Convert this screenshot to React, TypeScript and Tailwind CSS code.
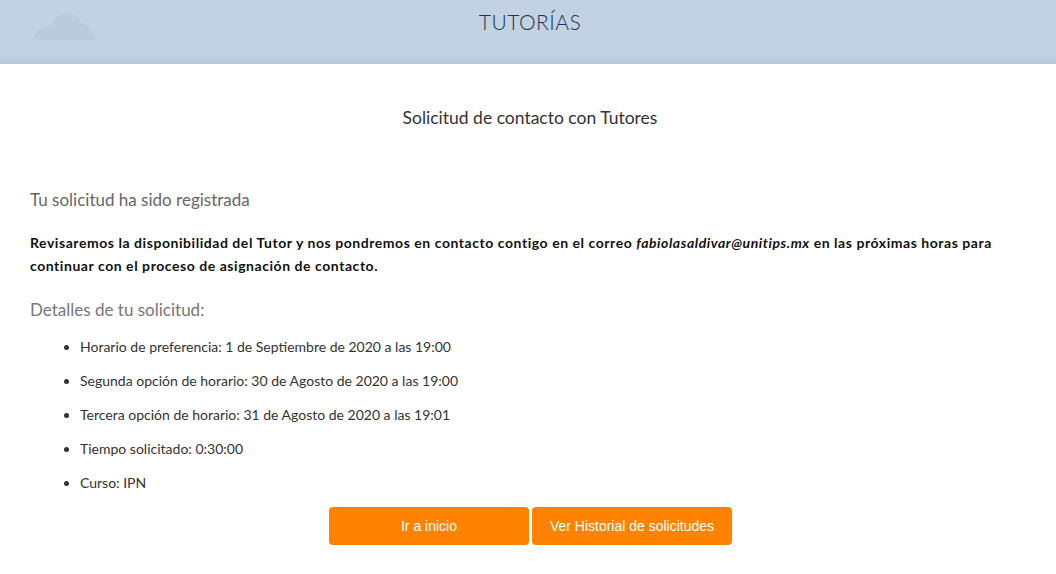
import React from "react";

const details = [
  "Horario de preferencia: 1 de Septiembre de 2020 a las 19:00",
  "Segunda opción de horario: 30 de Agosto de 2020 a las 19:00",
  "Tercera opción de horario: 31 de Agosto de 2020 a las 19:01",
  "Tiempo solicitado: 0:30:00",
  "Curso: IPN",
];

function Cloud() {
  return (
    <svg width="66" height="30" viewBox="0 0 66 30" className="absolute left-[31px] top-[12px]">
      <path
        d="M1 28 C3 20 10 15 22 14 C22 6 28 1 36 1 C44 1 49 6 50 11 C55 11 58 14 58 18 C62 19 64 23 65 28 Z"
        fill="#b8c8d9"
        opacity="0.7"
      />
    </svg>
  );
}

export default function App() {
  return (
    <div className="w-[1056px] h-[574px] bg-white font-['Lato',sans-serif] overflow-hidden">
      {/* Header */}
      <div className="relative h-[64px] bg-gradient-to-b from-[#c2d2e2] from-88% to-[#b8c7d7] flex justify-center pt-[6px]">
        <Cloud />
        <h1 className="text-[21px] font-light text-[#1b3552] tracking-[0.5px] pl-[4px]">TUTORÍAS</h1>
      </div>

      <div className="px-[30px]">
        <h2 className="text-center text-[17.5px] text-[#333] mt-[42px] leading-[24px] pl-[4px]">
          Solicitud de contacto con Tutores
        </h2>

        <h3 className="mt-[58px] text-[17px] text-[#666] leading-[24px]">Tu solicitud ha sido registrada</h3>

        <p className="mt-[19px] text-[14px] font-bold text-[#111] leading-[23px] tracking-[0.55px]">
          Revisaremos la disponibilidad del Tutor y nos pondremos en contacto contigo en el correo{" "}
          <em>fabiolasaldivar@unitips.mx</em> en las próximas horas para
          <br />
          continuar con el proceso de asignación de contacto.
        </p>

        <h3 className="mt-[21px] text-[17px] text-[#777] leading-[24px]">Detalles de tu solicitud:</h3>

        <ul className="mt-[15px] pl-[50px] list-disc text-[14px] text-[#333]">
          {details.map((d) => (
            <li key={d} className="leading-[20px] mb-[14px]">
              {d}
            </li>
          ))}
        </ul>

        <div className="flex justify-center gap-[3px] mt-[2px] pl-[5px]">
          <button className="w-[200px] h-[38px] rounded bg-[#ff8300] text-white text-[14px] font-['Liberation_Sans',sans-serif]">
            Ir a inicio
          </button>
          <button className="w-[200px] h-[38px] rounded bg-[#ff8300] text-white text-[14px] font-['Liberation_Sans',sans-serif]">
            Ver Historial de solicitudes
          </button>
        </div>
      </div>
    </div>
  );
}
